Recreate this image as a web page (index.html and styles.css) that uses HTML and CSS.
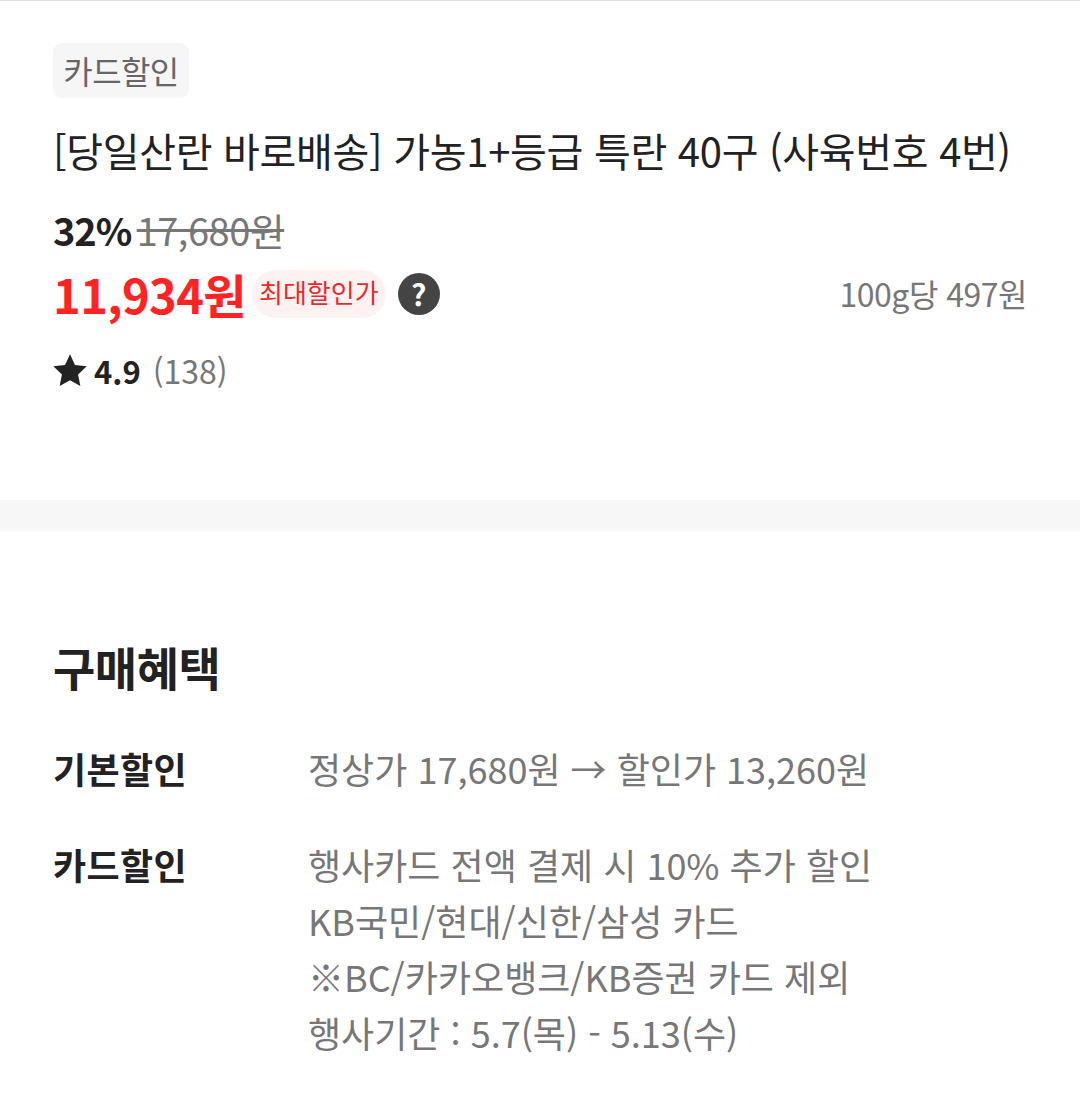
FILE: index.html
```html
<!DOCTYPE html>
<html lang="ko">
<head>
<meta charset="utf-8">
<title>상품</title>
<link rel="stylesheet" href="styles.css">
</head>
<body>
<section class="product">
  <span class="tag">카드할인</span>
  <h1 class="title">[당일산란 바로배송] 가농1+등급 특란 40구 (사육번호 4번)</h1>
  <div class="was"><b class="pct">32%</b> <s class="orig">17,680원</s></div>
  <div class="price-row">
    <strong class="price">11,934원</strong>
    <span class="badge">최대할인가</span>
    <span class="help">?</span>
    <span class="unit">100g당 497원</span>
  </div>
  <div class="rating">
    <svg class="star" viewBox="0 0 24 24"><path d="M12 .8l3.5 7.6 8.3 1-6.1 5.7 1.6 8.2L12 19.2l-7.3 4.1 1.6-8.2L.2 9.4l8.3-1z"/></svg>
    <b class="score">4.9</b>
    <span class="count">(138)</span>
  </div>
</section>
<section class="benefit">
  <h2 class="heading">구매혜택</h2>
  <div class="line">
    <div class="label">기본할인</div>
    <div class="desc">정상가 17,680원 → 할인가 13,260원</div>
  </div>
  <div class="line">
    <div class="label">카드할인</div>
    <div class="desc">행사카드 전액 결제 시 10% 추가 할인<br>KB국민/현대/신한/삼성 카드<br>※BC/카카오뱅크/KB증권 카드 제외<br>행사기간 : 5.7(목) - 5.13(수)</div>
  </div>
</section>
</body>
</html>
```
FILE: styles.css
```css
* { box-sizing: border-box; }
html, body { margin: 0; padding: 0; }
body {
  width: 1080px;
  height: 1113px;
  overflow: hidden;
  background: #fff;
  color: #222;
  font-family: "Noto Sans CJK KR", "Noto Sans", sans-serif;
}
.product {
  height: 531px;
  padding: 42px 53px 0 53px;
  border-top: 1px solid #e0e0e4;
  border-bottom: 31px solid #f7f7f7;
}
.tag {
  display: inline-block;
  width: 136px;
  height: 55px;
  border-radius: 9px;
  background: #f6f6f6;
  color: #666;
  font-size: 32px;
  line-height: 54px;
  letter-spacing: -0.6px;
  text-align: center;
}
.title {
  margin: 24px 0 0;
  font-size: 40px;
  font-weight: 400;
  line-height: 56px;
  letter-spacing: -0.3px;
  white-space: nowrap;
}
.was {
  margin-top: 27px;
  font-size: 38px;
  line-height: 50px;
  letter-spacing: -1.1px;
  word-spacing: -4px;
}
.pct { font-weight: 700; }
.orig { color: #777; letter-spacing: -0.5px; }
.price-row { display: flex; align-items: center; height: 62px; margin-top: 8px; }
.price {
  margin-bottom: 2px;
  color: #ff2323;
  font-size: 47px;
  font-weight: 700;
  letter-spacing: -0.6px;
}
.badge {
  margin-left: 6px;
  height: 48px;
  padding: 0 7px;
  border-radius: 24px;
  background: #fdf2f2;
  color: #e92a2a;
  font-size: 26px;
  line-height: 44px;
}
.help {
  width: 42px;
  height: 42px;
  margin-left: 12px;
  border-radius: 50%;
  background: #444;
  color: #fff;
  font-size: 30px;
  font-weight: 700;
  line-height: 40px;
  text-align: center;
}
.unit { margin: 0 0 2px auto; color: #777; font-size: 32px; letter-spacing: -0.5px; }
.rating { display: flex; align-items: center; margin-top: 25px; height: 40px; }
.star { width: 34px; height: 34px; fill: #222; }
.score { margin-left: 7px; font-size: 31px; }
.count { margin-left: 12px; color: #777; font-size: 32px; }
.benefit { padding: 101px 54px 0 53px; }
.heading { margin: 0; font-size: 46px; font-weight: 700; line-height: 68px; letter-spacing: -0.5px; }
.line { display: flex; margin-top: 40px; }
.label { width: 255px; font-size: 36px; font-weight: 700; line-height: 56px; letter-spacing: 0.4px; }
.desc { color: #777; font-size: 36px; line-height: 56px; }
```
